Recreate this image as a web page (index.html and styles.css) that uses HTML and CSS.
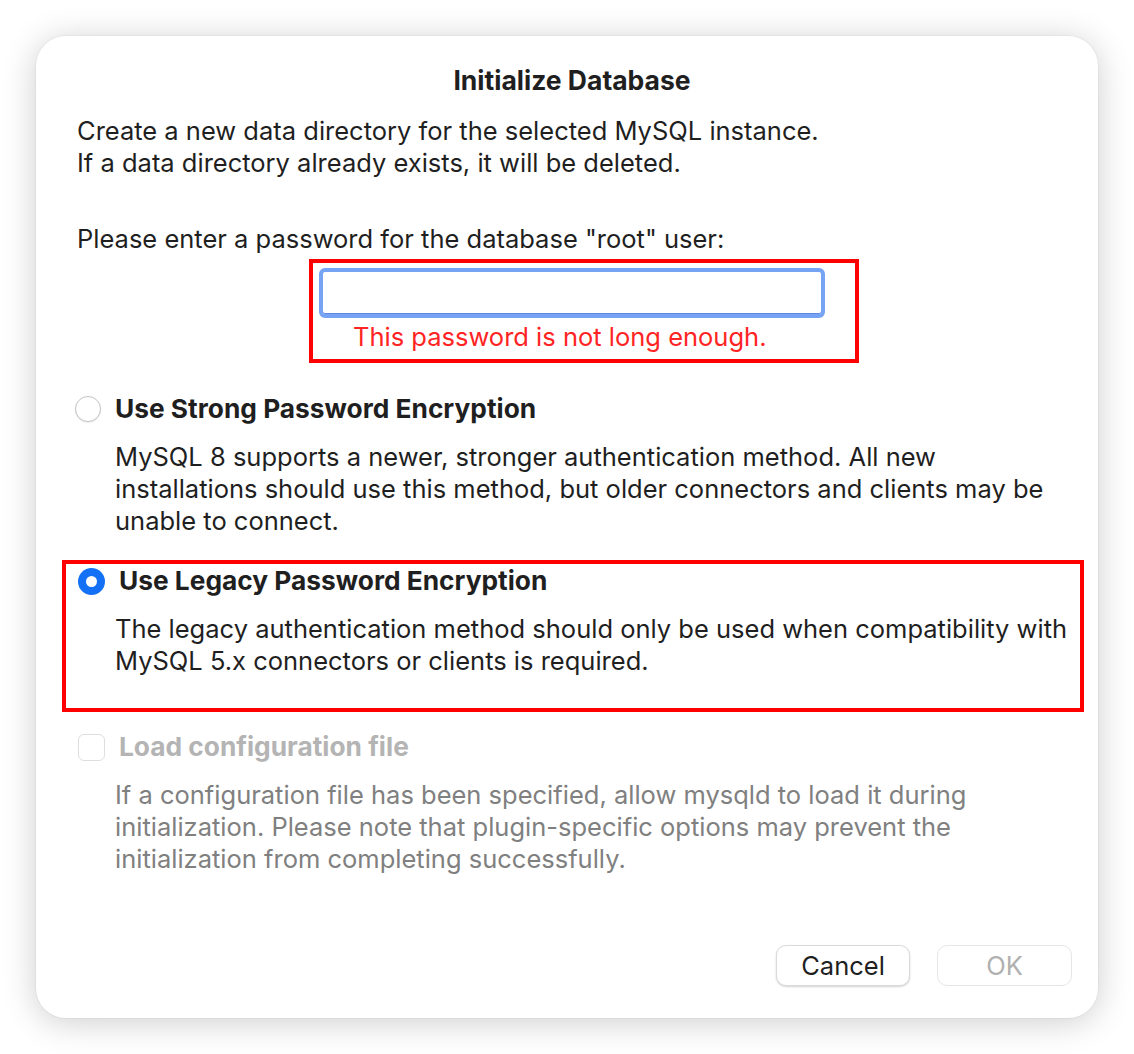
FILE: index.html
```html
<!DOCTYPE html>
<html lang="en">
<head>
<meta charset="utf-8">
<title>Initialize Database</title>
<link rel="stylesheet" href="styles.css">
</head>
<body>
<div class="dialog">
  <h1 class="title">Initialize Database</h1>
  <p class="intro">Create a new data directory for the selected MySQL instance.<br>If a data directory already exists, it will be deleted.</p>
  <p class="prompt">Please enter a password for the database "root" user:</p>
  <div class="pw-box">
    <div class="input"></div>
    <div class="error">This password is not long enough.</div>
  </div>

  <div class="option strong">
    <span class="radio"></span>
    <span class="label">Use Strong Password Encryption</span>
  </div>
  <p class="desc">MySQL 8 supports a newer, stronger authentication method. All new<br>installations should use this method, but older connectors and clients may be<br>unable to connect.</p>

  <div class="legacy-box">
    <div class="option legacy">
      <span class="radio checked"></span>
      <span class="label">Use Legacy Password Encryption</span>
    </div>
    <p class="desc legacy-desc">The legacy authentication method should only be used when compatibility with<br>MySQL 5.x connectors or clients is required.</p>
  </div>

  <div class="option config">
    <span class="checkbox"></span>
    <span class="label disabled">Load configuration file</span>
  </div>
  <p class="desc disabled-desc">If a configuration file has been specified, allow mysqld to load it during<br>initialization. Please note that plugin-specific options may prevent the<br>initialization from completing successfully.</p>

  <div class="buttons">
    <button class="btn">Cancel</button>
    <button class="btn btn-disabled">OK</button>
  </div>
</div>
</body>
</html>
```

FILE: styles.css
```css
html, body {
  margin: 0;
  padding: 0;
  background: #ffffff;
}
body {
  padding: 36px;
  font-family: Inter, "Noto Sans", "Liberation Sans", sans-serif;
  color: #1f1f1f;
  font-size: 25.5px;
  line-height: 32px;
}
.dialog {
  box-sizing: border-box;
  width: 1062px;
  height: 982px;
  background: #ffffff;
  border-radius: 30px;
  box-shadow: 0 4px 34px rgba(0,0,0,0.2), 0 0 0 1px rgba(0,0,0,0.03);
  padding: 28px 26px 32px 41px;
  display: flex;
  flex-direction: column;
  align-items: flex-start;
}
.title {
  margin: 0;
  align-self: stretch;
  text-align: center;
  font-size: 26.5px;
  font-weight: 700;
  line-height: 32px;
  padding-right: 5px;
}
.intro {
  margin: 19px 0 0 0;
}
.prompt {
  margin: 44px 0 0 0;
}
.pw-box {
  margin: 4px 0 0 232px;
  box-sizing: border-box;
  width: 550px;
  height: 104px;
  border: 4px solid #ff0000;
  padding: 5px 6px 0 6px;
}
.input {
  box-sizing: border-box;
  width: 506px;
  height: 50px;
  border: 4px solid #77a3f5;
  border-radius: 6px;
  background: #fff;
  box-shadow: inset 0 -1px 0 #5d88dd;
}
.error {
  margin: 3px 0 0 34px;
  color: #ff2424;
}
.option {
  display: flex;
  align-items: center;
  height: 32px;
}
.label {
  font-weight: 700;
  font-size: 26.3px;
}
.strong {
  margin: 30px 0 0 -2px;
}
.strong .label {
  margin-left: 14px;
}
.radio {
  box-sizing: border-box;
  width: 26px;
  height: 26px;
  border-radius: 50%;
  border: 1px solid #c4c4c4;
  background: #fff;
  box-shadow: 0 1px 1px rgba(0,0,0,0.08);
}
.radio.checked {
  width: 27px;
  height: 27px;
  border: none;
  background: #1470f5;
  display: flex;
  align-items: center;
  justify-content: center;
  box-shadow: none;
}
.radio.checked::after {
  content: "";
  width: 11px;
  height: 11px;
  border-radius: 50%;
  background: #fff;
}
.desc {
  margin: 16px 0 0 38px;
}
.legacy-box {
  margin: 23px 0 0 -15px;
  box-sizing: border-box;
  width: 1022px;
  height: 152px;
  border: 4px solid #ff0000;
  padding: 1px 0 0 12px;
}
.legacy .label {
  margin-left: 14px;
}
.legacy-desc {
  margin: 16px 0 0 37px;
}
.config {
  margin: 19px 0 0 1px;
}
.checkbox {
  box-sizing: border-box;
  width: 27px;
  height: 27px;
  border-radius: 6px;
  border: 1px solid #dedede;
  background: #fff;
}
.config .label {
  margin-left: 14px;
}
.label.disabled {
  color: #b4b4b4;
}
.disabled-desc {
  color: #808080;
}
.buttons {
  margin-top: auto;
  align-self: flex-end;
  display: flex;
  gap: 27px;
}
.btn {
  box-sizing: border-box;
  width: 134px;
  height: 41px;
  font-family: inherit;
  font-size: 25.5px;
  line-height: 1;
  color: #1f1f1f;
  background: #fff;
  border: 1px solid #dadada;
  border-radius: 10px;
  box-shadow: 0 1px 2px rgba(0,0,0,0.18);
  padding: 0;
}
.btn-disabled {
  width: 135px;
  color: #b0b0b0;
  border-color: #e6e6e6;
  box-shadow: none;
}
```
